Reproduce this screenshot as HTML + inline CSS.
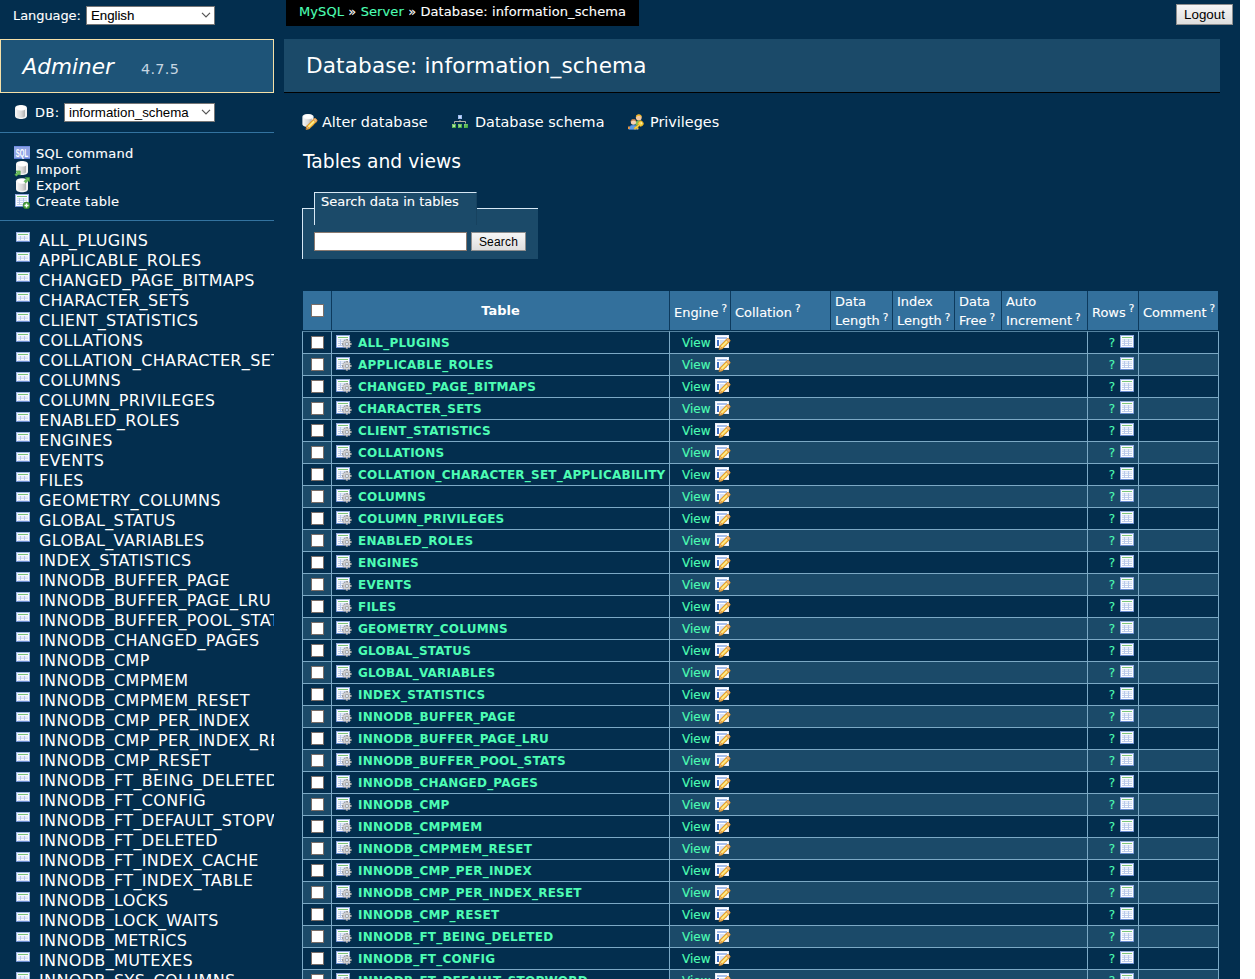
<!DOCTYPE html>
<html lang="en">
<head>
<meta charset="utf-8">
<title>Database: information_schema - Adminer</title>
<style>
html,body{margin:0;padding:0;background:#fff;}
body{width:1255px;height:979px;overflow:hidden;font-family:"DejaVu Sans","Liberation Sans",sans-serif;font-size:14.4px;line-height:18px;color:#fff;}
#page{position:relative;width:1240px;height:979px;overflow:hidden;background:#032e4e;}
a{color:#4dfdb4;text-decoration:none;}
svg.ic{width:16px;height:16px;display:inline-block;vertical-align:top;overflow:visible;}
#defs{position:absolute;width:0;height:0;overflow:hidden;}
/* sidebar */
#lang{position:absolute;left:13px;top:6px;height:19px;line-height:19px;font-size:12.96px;letter-spacing:-0.05px;white-space:nowrap;}
.sel{position:absolute;box-sizing:border-box;height:19px;background:#fff;border:1px solid #767676;color:#000;font:13.3px/17px "Liberation Sans",sans-serif;padding:0 0 0 4px;white-space:nowrap;overflow:hidden;}
.sel .chev{position:absolute;right:3px;top:5px;width:10px;height:6px;}
#lang .sel{left:73px;top:0;}
#menu{position:absolute;left:0;top:0;width:274px;height:979px;overflow:hidden;}
#menu h1{position:absolute;left:0;top:39px;width:272px;height:52px;margin:0;border:1px solid #f5e0a8;background:#1e5478;font-weight:normal;font-size:21.6px;}
#h1{position:absolute;left:21.5px;top:12px;line-height:30px;font-style:italic;color:#fff;}
.version{position:absolute;left:140px;top:17px;line-height:24px;font-size:14.4px;letter-spacing:.3px;color:#c6d6e2;}
#dbs{position:absolute;left:0;top:102px;margin:0;width:274px;height:30px;border-bottom:1px solid #3373a0;font-size:12.96px;}
#dbs svg.ic{position:absolute;left:13px;top:2px;}
#dbs .lbl{position:absolute;left:35px;top:1px;line-height:19px;letter-spacing:.5px;}
#dbs .sel{left:64px;top:1px;}
#menu .links{position:absolute;left:0;top:145px;margin:0;width:274px;height:75px;border-bottom:1px solid #3373a0;font-size:13px;line-height:16px;letter-spacing:.25px;}
#menu .links a{display:block;color:#fff;padding-left:36px;position:relative;height:16px;top:1px;}
#menu .links a svg.ic{position:absolute;left:14px;top:-1px;}
#menu .links a svg.sq{top:0;height:13px;}
#tables{position:absolute;left:0;top:231px;margin:0;padding:0;list-style:none;font-size:16px;line-height:20px;letter-spacing:.35px;white-space:nowrap;}
#tables li{position:relative;height:20px;padding-left:39px;}
#tables li a{color:#fff;}
#tables li svg.ic{position:absolute;left:16px;top:1px;width:14px;height:10px;}
/* content */
#breadcrumb{position:absolute;left:286px;top:0;margin:0;height:26px;width:353px;background:#000;font-size:13px;line-height:24px;letter-spacing:.1px;white-space:nowrap;}
#breadcrumb span{position:absolute;left:13px;top:0;}
#logout{position:absolute;left:1176px;top:4px;width:57px;height:21px;border:1px solid #8e8e8e;box-sizing:border-box;background:linear-gradient(#f6f6f6,#dedede);color:#000;font:13.33px/19px "Liberation Sans",sans-serif;text-align:center;}
h2{position:absolute;left:284px;top:39px;width:936px;height:53px;margin:0;background:#1b4a69;border-bottom:1px solid #000;font-weight:normal;font-size:21.6px;line-height:54px;text-indent:22px;letter-spacing:.13px;white-space:nowrap;}
#toplinks{position:absolute;left:0;top:113px;margin:0;height:18px;}
#toplinks a{position:absolute;top:0;color:#fff;white-space:nowrap;line-height:18px;padding-left:20px;}
#toplinks a svg.ic{position:absolute;left:0;top:1px;}
h3{position:absolute;left:303px;top:148px;margin:0;font-weight:normal;font-size:18.72px;line-height:28px;white-space:nowrap;}
#fs{position:absolute;left:302px;top:208px;width:235px;height:51px;background:#1b4a69;border-left:1px solid #d7e8f5;border-top:1px solid #d7e8f5;box-sizing:border-box;width:236px;}
#lg{position:absolute;left:11px;top:-17px;width:163px;height:33px;box-sizing:border-box;background:#1b4a69;border-left:1px solid #d7e8f5;border-top:1px solid #d7e8f5;border-right:1px solid #17425f;font-size:13px;line-height:18px;padding-left:6px;white-space:nowrap;}
.inp{position:absolute;left:11px;top:23px;width:153px;height:19px;box-sizing:border-box;background:#fff;border:1px solid #8a7a70;}
.btn{position:absolute;left:168px;top:23px;width:55px;height:19px;box-sizing:border-box;border:1px solid #8e8e8e;background:linear-gradient(#f6f6f6,#dedede);color:#000;font:12px/18px "Liberation Sans",sans-serif;letter-spacing:.2px;text-align:center;}
/* table */
#t{position:absolute;left:302px;top:291px;width:917px;table-layout:fixed;border-collapse:separate;border-spacing:0;font-size:12px;line-height:15px;white-space:nowrap;}
#t thead{font-size:12.96px;}
#t td,#t th{padding:0;border-left:1px solid #7ca9c5;border-top:1px solid #7ca9c5;height:21px;box-sizing:content-box;font-weight:normal;text-align:left;vertical-align:top;overflow:hidden;}
#t tbody td:last-child{border-right:1px solid #7ca9c5;}
#t tbody tr:first-child td,#t tbody tr:first-child th{border-top-color:#55829f;}
#t tbody tr.odd td{background:#1b4a69;}
#t tbody th{font-weight:bold;letter-spacing:.22px;}
#t tbody th a{position:relative;left:6px;top:4px;}
#t tbody th svg.ic{margin:3px 0 0 4px;}
#t thead td,#t thead th{background:#33709c;border-top:0;border-left:1px solid #0d3a5d;border-bottom:1px solid #032e4e;height:39px;vertical-align:middle;padding-left:4px;}
#t thead td:first-child{border-left-color:#032e4e;padding:0;}
#t thead td:last-child{border-right:1px solid #032e4e;}
#t thead th{text-align:center;font-weight:bold;padding:0;}
#t thead td{line-height:19px;}
sup{font-size:10.5px;line-height:0;vertical-align:baseline;position:relative;top:-4px;margin-left:3px;}
#t thead .s{position:relative;top:2px;}
#t thead .s sup{top:-5px;}
.cb{display:block;width:11px;height:11px;border:1px solid #7b6f69;background:#fff;margin:4px 0 0 8px;}
#t thead .cb{margin:0 0 0 8px;}
#t td.v a{margin-left:12px;position:relative;top:4px;}
#t td.v svg.ic{margin:2px 0 0 5px;}
#t td.r{text-align:right;}
#t td.r a{position:relative;top:4px;left:1px;}
#t td.r svg.ic{margin:2px 3px 0 5px;}
#lang,#dbs .lbl,#menu .links a,#breadcrumb span,#lg,#t thead td,#t tbody td a{-webkit-text-stroke:.12px currentColor;}

</style>
</head>
<body>
<svg id="defs" width="0" height="0">
<defs>
<linearGradient id="g-cyl" x1="0" x2="1" y1="0" y2="0"><stop offset="0" stop-color="#ececec"/><stop offset=".5" stop-color="#dcdcdc"/><stop offset="1" stop-color="#b2b2b2"/></linearGradient>
<linearGradient id="g-pen" x1="0" x2="1" y1="0" y2="1"><stop offset="0" stop-color="#ffe680"/><stop offset="1" stop-color="#f0b030"/></linearGradient>
<linearGradient id="g-grn" x1="0" x2="1" y1="0" y2="1"><stop offset="0" stop-color="#8fd67c"/><stop offset="1" stop-color="#2f9a2f"/></linearGradient>
<symbol id="s-cyl" viewBox="0 0 16 16">
<path d="M2 4c0-1.700 2.700-3 6-3s6 1.300 6 3v8c0 1.700-2.700 3-6 3s-6-1.300-6-3z" fill="#f3f3f3"/>
<path d="M4 5.800c1 .6 2.400.9 4 .9s3-.3 4-.9v6.300c0 .9-1.800 1.600-4 1.600s-4-.7-4-1.600z" fill="url(#g-cyl)"/>
<ellipse cx="8" cy="3.900" rx="4.800" ry="2.100" fill="#ffffff"/>
</symbol>
<symbol id="s-pencil" viewBox="0 0 16 16" overflow="visible">
<g transform="translate(3.200 15.300) rotate(-45)">
<path d="M0 0L3-1.900H12.200c1.300 0 2 .8 2 1.900s-.7 1.900-2 1.900H3z" fill="#f7c945" stroke="#d78f2b" stroke-width=".9" stroke-linejoin="round"/>
<path d="M3-.7H11.500V.5H3z" fill="#fff0a0"/>
<path d="M11.700-1.900h.7c1.200 0 1.800.8 1.800 1.900s-.6 1.900-1.800 1.900h-.7z" fill="#f3b98d" stroke="#d78f2b" stroke-width=".7"/>
<path d="M0 0L3-1.900V1.900z" fill="#ecc08c" stroke="#d78f2b" stroke-width=".7" stroke-linejoin="round"/>
<path d="M0 0l1.200-.75v1.500z" fill="#7a5230"/>
</g>
</symbol>
<symbol id="s-table" viewBox="0 0 16 16">
<rect x="1.500" y="1.500" width="13" height="12" fill="#fbfcff" stroke="#90aade"/>
<rect x="1" y="13" width="14" height="1" fill="#6c8ed0"/>
<rect x="3" y="3" width="10" height="1" fill="#7dc67a"/>
<rect x="3" y="5" width="10" height="7" fill="#b9caeb"/>
<g fill="#fff"><rect x="3" y="5.500" width="2" height="1.200"/><rect x="6" y="5.500" width="3" height="1.200"/><rect x="10" y="5.500" width="3" height="1.200"/>
<rect x="3" y="7.700" width="2" height="1.200"/><rect x="6" y="7.700" width="3" height="1.200"/><rect x="10" y="7.700" width="3" height="1.200"/>
<rect x="3" y="9.900" width="2" height="1.200"/><rect x="6" y="9.900" width="3" height="1.200"/><rect x="10" y="9.900" width="3" height="1.200"/></g>
</symbol>
</defs>
<symbol id="i-db" viewBox="0 0 16 16"><use href="#s-cyl" width="16" height="16"/></symbol>
<symbol id="i-dbedit" viewBox="0 0 16 16"><use href="#s-cyl" x="-1.500" y="-1" width="15" height="15"/><use href="#s-pencil" x="1" y="0" width="16" height="16"/></symbol>
<symbol id="i-import" viewBox="0 0 16 16"><use href="#s-cyl" x="0" y="-1" width="16" height="16"/>
<path d="M15.500 0.500v4.300l-1.400-1.300-2.400 2.400-1.600-1.600 2.400-2.400-1.300-1.400z" transform="translate(-9.300 9.400)" fill="#6fc060" stroke="#3f9a3a" stroke-width=".6"/></symbol>
<symbol id="i-export" viewBox="0 0 16 16"><use href="#s-cyl" x="0" y=".2" width="16" height="16"/>
<path d="M15.500 0.500v4.300l-1.400-1.300-2.400 2.400-1.600-1.600 2.400-2.400-1.300-1.400z" fill="#6fc060" stroke="#3f9a3a" stroke-width=".6"/></symbol>
<symbol id="i-sql" viewBox="0 0 16 13"><rect x="0" y="0" width="16" height="13" fill="#8ea4e6"/><rect x="0" y="0" width="16" height="1" fill="#6f8be0"/><rect x="0" y="12" width="16" height="1" fill="#5f7fd8"/>
<text x="1.700" y="10.500" font-family="Liberation Sans, sans-serif" font-size="10.500" font-weight="bold" fill="#fff" textLength="12.600" lengthAdjust="spacingAndGlyphs">SQL</text></symbol>
<symbol id="i-create" viewBox="0 0 16 16"><use href="#s-table" x="0" y="0" width="16" height="16"/>
<circle cx="12.500" cy="12.500" r="3.400" fill="#4aa03a" stroke="#2d7a26" stroke-width=".6"/><path d="M12.500 10.500v4M10.500 12.500h4" stroke="#fff" stroke-width="1.400"/></symbol>
<symbol id="i-tbl" viewBox="0 0 14 10">
<rect x=".5" y=".5" width="13" height="9" fill="#f6f9ff" stroke="#9db4e2"/>
<rect x="0" y="9" width="14" height="1" fill="#6c8ed0"/>
<rect x="2" y="2" width="10" height="1" fill="#7dc67a"/>
<rect x="2" y="4" width="10" height="4.500" fill="#b9caeb"/>
<g fill="#fff"><rect x="2" y="4.300" width="2" height="1.300"/><rect x="5" y="4.300" width="3" height="1.300"/><rect x="9" y="4.300" width="3" height="1.300"/>
<rect x="2" y="6.600" width="2" height="1.300"/><rect x="5" y="6.600" width="3" height="1.300"/><rect x="9" y="6.600" width="3" height="1.300"/></g>
</symbol>
<symbol id="i-tblrows" viewBox="0 0 16 16"><use href="#s-table" width="16" height="16"/></symbol>
<symbol id="i-tblgear" viewBox="0 0 16 16"><use href="#s-table" x="-1" y="-1" width="16" height="16"/>
<g transform="translate(10.900 9) scale(.92)">
<g fill="#d2d2d2" stroke="#7c7c7c" stroke-width=".55">
<rect x="-1" y="-5" width="2" height="2.400"/><rect x="-1" y="2.600" width="2" height="2.400"/><rect x="-5" y="-1" width="2.400" height="2"/><rect x="2.600" y="-1" width="2.400" height="2"/>
<g transform="rotate(45)"><rect x="-1" y="-4.800" width="2" height="2.300"/><rect x="-1" y="2.500" width="2" height="2.300"/><rect x="-4.800" y="-1" width="2.300" height="2"/><rect x="2.500" y="-1" width="2.300" height="2"/></g>
</g>
<circle r="2.700" fill="#d9d9d9" stroke="#8a8a8a" stroke-width=".6"/>
<circle r="2.900" fill="none" stroke="#d6d6d6" stroke-width="1.300"/>
<circle r="1.800" fill="#dbe7f8" stroke="#7c7c7c" stroke-width=".6"/>
</g></symbol>
<symbol id="i-tbledit" viewBox="0 0 16 16">
<rect x=".5" y="1.500" width="13" height="12" fill="#ffffff" stroke="#e6ecf9"/>
<rect x="2" y="3" width="10" height="2" fill="#a9c0ec"/>
<rect x="2" y="6" width="2" height="6" fill="#3f6fc4"/><rect x="5" y="6" width="7" height="6" fill="#d6e1f6"/>
<use href="#s-pencil" x="1" y="0" width="16" height="16"/></symbol>
<symbol id="i-schema" viewBox="0 0 16 16">
<rect x="6" y="1" width="4" height="4" fill="#9dbcf0"/><rect x="7" y="2" width="2" height="2" fill="#cfdcf6"/>
<path d="M8 6v1.500M2.500 9.500V7.500h11v2" fill="none" stroke="#b8b0a8" stroke-width="1"/>
<rect x="0" y="10" width="4" height="4" fill="url(#g-grn)"/><rect x="6" y="10" width="4" height="4" fill="url(#g-grn)"/><rect x="12" y="10" width="4" height="4" fill="url(#g-grn)"/>
<rect x="1" y="11" width="2" height="2" fill="#b5e3a8"/><rect x="7" y="11" width="2" height="2" fill="#9ad68c"/><rect x="13" y="11" width="2" height="2" fill="#5fb654"/>
</symbol>
<symbol id="i-priv" viewBox="0 0 16 16">
<path d="M7.500 9.500c0-2 1.500-3 3.500-3s3.500 1 3.500 3v2h-7z" fill="#7ac05a" stroke="#4a8f35" stroke-width=".6"/>
<circle cx="10.800" cy="3.600" r="2.900" fill="#f3c9a0"/><path d="M7.800 3.600c0-2.200 1.300-3.300 3-3.300s3 1.100 3 3.300c-.6-1-1.700-1.600-3-1.600s-2.400.6-3 1.600z" fill="#f0b429"/>
<path d="M.8 15.500c0-3 1.800-4.500 4.700-4.500s4.700 1.500 4.700 4.500z" fill="#5c9be6" stroke="#3a78c8" stroke-width=".6"/>
<rect x="0" y="12.500" width="1.800" height="2.500" fill="#f0963c"/>
<circle cx="5.500" cy="8" r="2.700" fill="#f6d2b0"/><path d="M2.600 8c0-2.100 1.300-3.100 2.900-3.100s2.900 1 2.900 3.100c-.6-.9-1.700-1.500-2.900-1.500s-2.300.6-2.900 1.500z" fill="#b5713c"/>
<g transform="rotate(-40 11 11)"><circle cx="13.200" cy="11" r="2.600" fill="#f9d648" stroke="#e0a21a" stroke-width=".8"/><circle cx="14" cy="11" r=".8" fill="#fff3b0"/><path d="M5 10.200h6v1.600H8.500v1.400H7v-1.400H5z" fill="#f9d648" stroke="#e0a21a" stroke-width=".7"/></g>
</symbol>
</svg>

<div id="page">
<div id="lang">Language: <span class="sel" style="width:129px"><span>English</span><svg class="chev" viewBox="0 0 10 6"><path d="M1 .8l4 4 4-4" fill="none" stroke="#555" stroke-width="1.2"/></svg></span></div>
<div id="menu">
<h1><a id="h1">Adminer</a> <span class="version">4.7.5</span></h1>
<p id="dbs"><svg class="ic"><use href="#i-db"/></svg><span class="lbl">DB:</span> <span class="sel" style="width:151px"><span>information_schema</span><svg class="chev" viewBox="0 0 10 6"><path d="M1 .8l4 4 4-4" fill="none" stroke="#555" stroke-width="1.2"/></svg></span></p>
<p class="links">
<a><svg class="ic sq"><use href="#i-sql"/></svg>SQL command</a>
<a><svg class="ic"><use href="#i-import"/></svg>Import</a>
<a><svg class="ic"><use href="#i-export"/></svg>Export</a>
<a><svg class="ic"><use href="#i-create"/></svg>Create table</a>
</p>
<ul id="tables">
<li><svg class="ic"><use href="#i-tbl"/></svg><a>ALL_PLUGINS</a></li>
<li><svg class="ic"><use href="#i-tbl"/></svg><a>APPLICABLE_ROLES</a></li>
<li><svg class="ic"><use href="#i-tbl"/></svg><a>CHANGED_PAGE_BITMAPS</a></li>
<li><svg class="ic"><use href="#i-tbl"/></svg><a>CHARACTER_SETS</a></li>
<li><svg class="ic"><use href="#i-tbl"/></svg><a>CLIENT_STATISTICS</a></li>
<li><svg class="ic"><use href="#i-tbl"/></svg><a>COLLATIONS</a></li>
<li><svg class="ic"><use href="#i-tbl"/></svg><a>COLLATION_CHARACTER_SET_APPLICABILITY</a></li>
<li><svg class="ic"><use href="#i-tbl"/></svg><a>COLUMNS</a></li>
<li><svg class="ic"><use href="#i-tbl"/></svg><a>COLUMN_PRIVILEGES</a></li>
<li><svg class="ic"><use href="#i-tbl"/></svg><a>ENABLED_ROLES</a></li>
<li><svg class="ic"><use href="#i-tbl"/></svg><a>ENGINES</a></li>
<li><svg class="ic"><use href="#i-tbl"/></svg><a>EVENTS</a></li>
<li><svg class="ic"><use href="#i-tbl"/></svg><a>FILES</a></li>
<li><svg class="ic"><use href="#i-tbl"/></svg><a>GEOMETRY_COLUMNS</a></li>
<li><svg class="ic"><use href="#i-tbl"/></svg><a>GLOBAL_STATUS</a></li>
<li><svg class="ic"><use href="#i-tbl"/></svg><a>GLOBAL_VARIABLES</a></li>
<li><svg class="ic"><use href="#i-tbl"/></svg><a>INDEX_STATISTICS</a></li>
<li><svg class="ic"><use href="#i-tbl"/></svg><a>INNODB_BUFFER_PAGE</a></li>
<li><svg class="ic"><use href="#i-tbl"/></svg><a>INNODB_BUFFER_PAGE_LRU</a></li>
<li><svg class="ic"><use href="#i-tbl"/></svg><a>INNODB_BUFFER_POOL_STATS</a></li>
<li><svg class="ic"><use href="#i-tbl"/></svg><a>INNODB_CHANGED_PAGES</a></li>
<li><svg class="ic"><use href="#i-tbl"/></svg><a>INNODB_CMP</a></li>
<li><svg class="ic"><use href="#i-tbl"/></svg><a>INNODB_CMPMEM</a></li>
<li><svg class="ic"><use href="#i-tbl"/></svg><a>INNODB_CMPMEM_RESET</a></li>
<li><svg class="ic"><use href="#i-tbl"/></svg><a>INNODB_CMP_PER_INDEX</a></li>
<li><svg class="ic"><use href="#i-tbl"/></svg><a>INNODB_CMP_PER_INDEX_RESET</a></li>
<li><svg class="ic"><use href="#i-tbl"/></svg><a>INNODB_CMP_RESET</a></li>
<li><svg class="ic"><use href="#i-tbl"/></svg><a>INNODB_FT_BEING_DELETED</a></li>
<li><svg class="ic"><use href="#i-tbl"/></svg><a>INNODB_FT_CONFIG</a></li>
<li><svg class="ic"><use href="#i-tbl"/></svg><a>INNODB_FT_DEFAULT_STOPWORD</a></li>
<li><svg class="ic"><use href="#i-tbl"/></svg><a>INNODB_FT_DELETED</a></li>
<li><svg class="ic"><use href="#i-tbl"/></svg><a>INNODB_FT_INDEX_CACHE</a></li>
<li><svg class="ic"><use href="#i-tbl"/></svg><a>INNODB_FT_INDEX_TABLE</a></li>
<li><svg class="ic"><use href="#i-tbl"/></svg><a>INNODB_LOCKS</a></li>
<li><svg class="ic"><use href="#i-tbl"/></svg><a>INNODB_LOCK_WAITS</a></li>
<li><svg class="ic"><use href="#i-tbl"/></svg><a>INNODB_METRICS</a></li>
<li><svg class="ic"><use href="#i-tbl"/></svg><a>INNODB_MUTEXES</a></li>
<li><svg class="ic"><use href="#i-tbl"/></svg><a>INNODB_SYS_COLUMNS</a></li>
<li><svg class="ic"><use href="#i-tbl"/></svg><a>INNODB_SYS_DATAFILES</a></li>
</ul>
</div>
<div id="content">
<p id="breadcrumb"><span><a>MySQL</a> » <a>Server</a> » Database: information_schema</span></p>
<span id="logout">Logout</span>
<h2>Database: information_schema</h2>
<p class="links" id="toplinks"><a style="left:302px"><svg class="ic"><use href="#i-dbedit"/></svg>Alter database</a><a style="left:452px;padding-left:23px"><svg class="ic"><use href="#i-schema"/></svg>Database schema</a><a style="left:628px;padding-left:22px"><svg class="ic"><use href="#i-priv"/></svg>Privileges</a></p>
<h3>Tables and views</h3>
<div id="fs"><div id="lg">Search data in tables</div><span class="inp"></span><span class="btn">Search</span></div>
<table id="t" cellspacing="0">
<colgroup><col style="width:29px"><col style="width:338px"><col style="width:61px"><col style="width:100px"><col style="width:62px"><col style="width:62px"><col style="width:47px"><col style="width:86px"><col style="width:51px"><col style="width:81px"></colgroup>
<thead><tr><td class="c"><span class="cb"></span></td><th>Table</th><td><span class="s">Engine<sup>?</sup></span></td><td><span class="s">Collation<sup>?</sup></span></td><td>Data<br>Length<sup>?</sup></td><td>Index<br>Length<sup>?</sup></td><td>Data<br>Free<sup>?</sup></td><td>Auto<br>Increment<sup>?</sup></td><td><span class="s">Rows<sup>?</sup></span></td><td><span class="s">Comment<sup>?</sup></span></td></tr></thead>
<tbody>
<tr><td class="c"><span class="cb"></span></td><th><svg class="ic"><use href="#i-tblgear"/></svg><a>ALL_PLUGINS</a></th><td colspan="6" class="v"><a>View</a><svg class="ic"><use href="#i-tbledit"/></svg></td><td class="r"><a>?</a><svg class="ic"><use href="#i-tblrows"/></svg></td><td></td></tr>
<tr class=odd><td class="c"><span class="cb"></span></td><th><svg class="ic"><use href="#i-tblgear"/></svg><a>APPLICABLE_ROLES</a></th><td colspan="6" class="v"><a>View</a><svg class="ic"><use href="#i-tbledit"/></svg></td><td class="r"><a>?</a><svg class="ic"><use href="#i-tblrows"/></svg></td><td></td></tr>
<tr><td class="c"><span class="cb"></span></td><th><svg class="ic"><use href="#i-tblgear"/></svg><a>CHANGED_PAGE_BITMAPS</a></th><td colspan="6" class="v"><a>View</a><svg class="ic"><use href="#i-tbledit"/></svg></td><td class="r"><a>?</a><svg class="ic"><use href="#i-tblrows"/></svg></td><td></td></tr>
<tr class=odd><td class="c"><span class="cb"></span></td><th><svg class="ic"><use href="#i-tblgear"/></svg><a>CHARACTER_SETS</a></th><td colspan="6" class="v"><a>View</a><svg class="ic"><use href="#i-tbledit"/></svg></td><td class="r"><a>?</a><svg class="ic"><use href="#i-tblrows"/></svg></td><td></td></tr>
<tr><td class="c"><span class="cb"></span></td><th><svg class="ic"><use href="#i-tblgear"/></svg><a>CLIENT_STATISTICS</a></th><td colspan="6" class="v"><a>View</a><svg class="ic"><use href="#i-tbledit"/></svg></td><td class="r"><a>?</a><svg class="ic"><use href="#i-tblrows"/></svg></td><td></td></tr>
<tr class=odd><td class="c"><span class="cb"></span></td><th><svg class="ic"><use href="#i-tblgear"/></svg><a>COLLATIONS</a></th><td colspan="6" class="v"><a>View</a><svg class="ic"><use href="#i-tbledit"/></svg></td><td class="r"><a>?</a><svg class="ic"><use href="#i-tblrows"/></svg></td><td></td></tr>
<tr><td class="c"><span class="cb"></span></td><th><svg class="ic"><use href="#i-tblgear"/></svg><a>COLLATION_CHARACTER_SET_APPLICABILITY</a></th><td colspan="6" class="v"><a>View</a><svg class="ic"><use href="#i-tbledit"/></svg></td><td class="r"><a>?</a><svg class="ic"><use href="#i-tblrows"/></svg></td><td></td></tr>
<tr class=odd><td class="c"><span class="cb"></span></td><th><svg class="ic"><use href="#i-tblgear"/></svg><a>COLUMNS</a></th><td colspan="6" class="v"><a>View</a><svg class="ic"><use href="#i-tbledit"/></svg></td><td class="r"><a>?</a><svg class="ic"><use href="#i-tblrows"/></svg></td><td></td></tr>
<tr><td class="c"><span class="cb"></span></td><th><svg class="ic"><use href="#i-tblgear"/></svg><a>COLUMN_PRIVILEGES</a></th><td colspan="6" class="v"><a>View</a><svg class="ic"><use href="#i-tbledit"/></svg></td><td class="r"><a>?</a><svg class="ic"><use href="#i-tblrows"/></svg></td><td></td></tr>
<tr class=odd><td class="c"><span class="cb"></span></td><th><svg class="ic"><use href="#i-tblgear"/></svg><a>ENABLED_ROLES</a></th><td colspan="6" class="v"><a>View</a><svg class="ic"><use href="#i-tbledit"/></svg></td><td class="r"><a>?</a><svg class="ic"><use href="#i-tblrows"/></svg></td><td></td></tr>
<tr><td class="c"><span class="cb"></span></td><th><svg class="ic"><use href="#i-tblgear"/></svg><a>ENGINES</a></th><td colspan="6" class="v"><a>View</a><svg class="ic"><use href="#i-tbledit"/></svg></td><td class="r"><a>?</a><svg class="ic"><use href="#i-tblrows"/></svg></td><td></td></tr>
<tr class=odd><td class="c"><span class="cb"></span></td><th><svg class="ic"><use href="#i-tblgear"/></svg><a>EVENTS</a></th><td colspan="6" class="v"><a>View</a><svg class="ic"><use href="#i-tbledit"/></svg></td><td class="r"><a>?</a><svg class="ic"><use href="#i-tblrows"/></svg></td><td></td></tr>
<tr><td class="c"><span class="cb"></span></td><th><svg class="ic"><use href="#i-tblgear"/></svg><a>FILES</a></th><td colspan="6" class="v"><a>View</a><svg class="ic"><use href="#i-tbledit"/></svg></td><td class="r"><a>?</a><svg class="ic"><use href="#i-tblrows"/></svg></td><td></td></tr>
<tr class=odd><td class="c"><span class="cb"></span></td><th><svg class="ic"><use href="#i-tblgear"/></svg><a>GEOMETRY_COLUMNS</a></th><td colspan="6" class="v"><a>View</a><svg class="ic"><use href="#i-tbledit"/></svg></td><td class="r"><a>?</a><svg class="ic"><use href="#i-tblrows"/></svg></td><td></td></tr>
<tr><td class="c"><span class="cb"></span></td><th><svg class="ic"><use href="#i-tblgear"/></svg><a>GLOBAL_STATUS</a></th><td colspan="6" class="v"><a>View</a><svg class="ic"><use href="#i-tbledit"/></svg></td><td class="r"><a>?</a><svg class="ic"><use href="#i-tblrows"/></svg></td><td></td></tr>
<tr class=odd><td class="c"><span class="cb"></span></td><th><svg class="ic"><use href="#i-tblgear"/></svg><a>GLOBAL_VARIABLES</a></th><td colspan="6" class="v"><a>View</a><svg class="ic"><use href="#i-tbledit"/></svg></td><td class="r"><a>?</a><svg class="ic"><use href="#i-tblrows"/></svg></td><td></td></tr>
<tr><td class="c"><span class="cb"></span></td><th><svg class="ic"><use href="#i-tblgear"/></svg><a>INDEX_STATISTICS</a></th><td colspan="6" class="v"><a>View</a><svg class="ic"><use href="#i-tbledit"/></svg></td><td class="r"><a>?</a><svg class="ic"><use href="#i-tblrows"/></svg></td><td></td></tr>
<tr class=odd><td class="c"><span class="cb"></span></td><th><svg class="ic"><use href="#i-tblgear"/></svg><a>INNODB_BUFFER_PAGE</a></th><td colspan="6" class="v"><a>View</a><svg class="ic"><use href="#i-tbledit"/></svg></td><td class="r"><a>?</a><svg class="ic"><use href="#i-tblrows"/></svg></td><td></td></tr>
<tr><td class="c"><span class="cb"></span></td><th><svg class="ic"><use href="#i-tblgear"/></svg><a>INNODB_BUFFER_PAGE_LRU</a></th><td colspan="6" class="v"><a>View</a><svg class="ic"><use href="#i-tbledit"/></svg></td><td class="r"><a>?</a><svg class="ic"><use href="#i-tblrows"/></svg></td><td></td></tr>
<tr class=odd><td class="c"><span class="cb"></span></td><th><svg class="ic"><use href="#i-tblgear"/></svg><a>INNODB_BUFFER_POOL_STATS</a></th><td colspan="6" class="v"><a>View</a><svg class="ic"><use href="#i-tbledit"/></svg></td><td class="r"><a>?</a><svg class="ic"><use href="#i-tblrows"/></svg></td><td></td></tr>
<tr><td class="c"><span class="cb"></span></td><th><svg class="ic"><use href="#i-tblgear"/></svg><a>INNODB_CHANGED_PAGES</a></th><td colspan="6" class="v"><a>View</a><svg class="ic"><use href="#i-tbledit"/></svg></td><td class="r"><a>?</a><svg class="ic"><use href="#i-tblrows"/></svg></td><td></td></tr>
<tr class=odd><td class="c"><span class="cb"></span></td><th><svg class="ic"><use href="#i-tblgear"/></svg><a>INNODB_CMP</a></th><td colspan="6" class="v"><a>View</a><svg class="ic"><use href="#i-tbledit"/></svg></td><td class="r"><a>?</a><svg class="ic"><use href="#i-tblrows"/></svg></td><td></td></tr>
<tr><td class="c"><span class="cb"></span></td><th><svg class="ic"><use href="#i-tblgear"/></svg><a>INNODB_CMPMEM</a></th><td colspan="6" class="v"><a>View</a><svg class="ic"><use href="#i-tbledit"/></svg></td><td class="r"><a>?</a><svg class="ic"><use href="#i-tblrows"/></svg></td><td></td></tr>
<tr class=odd><td class="c"><span class="cb"></span></td><th><svg class="ic"><use href="#i-tblgear"/></svg><a>INNODB_CMPMEM_RESET</a></th><td colspan="6" class="v"><a>View</a><svg class="ic"><use href="#i-tbledit"/></svg></td><td class="r"><a>?</a><svg class="ic"><use href="#i-tblrows"/></svg></td><td></td></tr>
<tr><td class="c"><span class="cb"></span></td><th><svg class="ic"><use href="#i-tblgear"/></svg><a>INNODB_CMP_PER_INDEX</a></th><td colspan="6" class="v"><a>View</a><svg class="ic"><use href="#i-tbledit"/></svg></td><td class="r"><a>?</a><svg class="ic"><use href="#i-tblrows"/></svg></td><td></td></tr>
<tr class=odd><td class="c"><span class="cb"></span></td><th><svg class="ic"><use href="#i-tblgear"/></svg><a>INNODB_CMP_PER_INDEX_RESET</a></th><td colspan="6" class="v"><a>View</a><svg class="ic"><use href="#i-tbledit"/></svg></td><td class="r"><a>?</a><svg class="ic"><use href="#i-tblrows"/></svg></td><td></td></tr>
<tr><td class="c"><span class="cb"></span></td><th><svg class="ic"><use href="#i-tblgear"/></svg><a>INNODB_CMP_RESET</a></th><td colspan="6" class="v"><a>View</a><svg class="ic"><use href="#i-tbledit"/></svg></td><td class="r"><a>?</a><svg class="ic"><use href="#i-tblrows"/></svg></td><td></td></tr>
<tr class=odd><td class="c"><span class="cb"></span></td><th><svg class="ic"><use href="#i-tblgear"/></svg><a>INNODB_FT_BEING_DELETED</a></th><td colspan="6" class="v"><a>View</a><svg class="ic"><use href="#i-tbledit"/></svg></td><td class="r"><a>?</a><svg class="ic"><use href="#i-tblrows"/></svg></td><td></td></tr>
<tr><td class="c"><span class="cb"></span></td><th><svg class="ic"><use href="#i-tblgear"/></svg><a>INNODB_FT_CONFIG</a></th><td colspan="6" class="v"><a>View</a><svg class="ic"><use href="#i-tbledit"/></svg></td><td class="r"><a>?</a><svg class="ic"><use href="#i-tblrows"/></svg></td><td></td></tr>
<tr class=odd><td class="c"><span class="cb"></span></td><th><svg class="ic"><use href="#i-tblgear"/></svg><a>INNODB_FT_DEFAULT_STOPWORD</a></th><td colspan="6" class="v"><a>View</a><svg class="ic"><use href="#i-tbledit"/></svg></td><td class="r"><a>?</a><svg class="ic"><use href="#i-tblrows"/></svg></td><td></td></tr>
<tr><td class="c"><span class="cb"></span></td><th><svg class="ic"><use href="#i-tblgear"/></svg><a>INNODB_FT_DELETED</a></th><td colspan="6" class="v"><a>View</a><svg class="ic"><use href="#i-tbledit"/></svg></td><td class="r"><a>?</a><svg class="ic"><use href="#i-tblrows"/></svg></td><td></td></tr>
</tbody>
</table>
</div>
</div>
</body>
</html>
